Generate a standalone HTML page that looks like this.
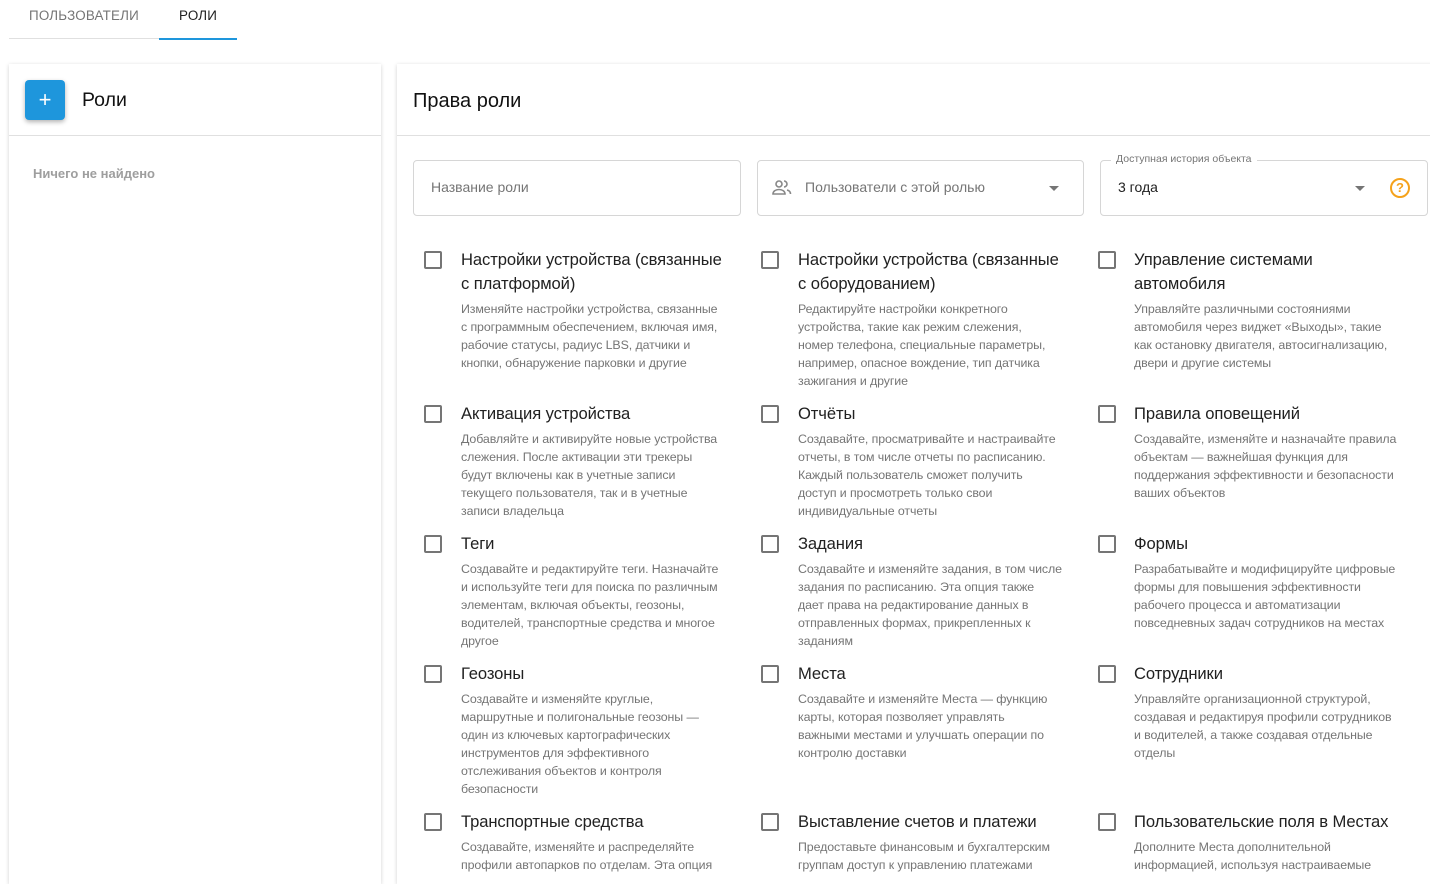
<!DOCTYPE html>
<html><head><meta charset="utf-8"><style>
*{box-sizing:border-box;margin:0;padding:0}
body{width:1430px;height:867px;overflow:hidden;background:#fff;font-family:"Liberation Sans",Arial,sans-serif;position:relative;color:#212121}
.tab{position:absolute;top:8px;font-size:13.4px;color:#757575;letter-spacing:.2px}
.card{position:absolute;background:#fff;box-shadow:0 1px 4px rgba(0,0,0,.18)}
.abs{position:absolute}
.cb{position:absolute;width:18px;height:18px;border:2px solid #757575;border-radius:2px}
.t{position:absolute;font-size:16.6px;line-height:24px;color:#212121;white-space:nowrap;letter-spacing:-.1px;margin-top:1px}
.d{position:absolute;font-size:12.4px;line-height:18px;color:#757575;white-space:nowrap;letter-spacing:-.1px;margin-top:1px}
.field{position:absolute;top:160px;height:56px;border:1px solid #d6d6d6;border-radius:4px;background:#fff}
.arrow{position:absolute;width:0;height:0;border-left:5px solid transparent;border-right:5px solid transparent;border-top:5px solid #757575}
</style></head><body>
<div class="tab" style="left:29px">ПОЛЬЗОВАТЕЛИ</div>
<div class="tab" style="left:179px;color:#212121">РОЛИ</div>
<div class="abs" style="left:9px;top:38px;width:228px;height:1px;background:#e0e0e0"></div>
<div class="abs" style="left:159px;top:38px;width:78px;height:2px;background:#1e96dc"></div>

<div class="card" style="left:9px;top:64px;width:372px;height:820px">
  <div class="abs" style="left:16px;top:16px;width:40px;height:40px;background:#1e96dc;border-radius:4px;box-shadow:0 2px 5px rgba(0,0,0,.3);color:#fff;font-size:22px;line-height:40px;text-align:center">+</div>
  <div class="abs" style="left:73px;top:25px;font-size:19.5px;color:#111">Роли</div>
  <div class="abs" style="left:0;top:71px;width:372px;height:1px;background:#e0e0e0"></div>
  <div class="abs" style="left:24px;top:102px;font-size:13px;color:#9e9e9e;font-weight:bold">Ничего не найдено</div>
</div>

<div class="card" style="left:397px;top:64px;width:1050px;height:820px"></div>
<div class="abs" style="left:413px;top:90px;font-size:20px;color:#111">Права роли</div>
<div class="abs" style="left:397px;top:135px;width:1033px;height:1px;background:#e0e0e0"></div>

<div class="field" style="left:413px;width:328px"><div class="abs" style="left:17px;top:18px;font-size:14px;color:#757575">Название роли</div></div>
<div class="field" style="left:757px;width:327px">
  <svg class="abs" style="left:14px;top:18px" width="20" height="18" viewBox="0 0 20 18" fill="none" stroke="#888" stroke-width="1.6"><circle cx="7" cy="5" r="3"/><path d="M1 15c0-3 3-4.5 6-4.5s6 1.5 6 4.5z"/><path d="M12 2a3 3 0 0 1 0 6M15 11c2 .5 3.5 1.8 3.5 4"/></svg>
  <div class="abs" style="left:47px;top:18px;font-size:14px;color:#757575">Пользователи с этой ролью</div>
  <div class="arrow" style="left:291px;top:25px"></div>
</div>
<div class="field" style="left:1100px;width:328px">
  <div class="abs" style="left:10px;top:-8px;background:#fff;padding:0 5px;font-size:10.5px;color:#757575">Доступная история объекта</div>
  <div class="abs" style="left:17px;top:18px;font-size:14px;color:#212121">3 года</div>
  <div class="arrow" style="left:254px;top:25px"></div>
  <div class="abs" style="left:289px;top:17px;width:20px;height:20px;border:2px solid #f5a21b;border-radius:50%;color:#f5a21b;font-size:13px;font-weight:bold;line-height:16px;text-align:center">?</div>
</div>

<!-- row 1 -->
<div class="cb" style="left:424px;top:251px"></div>
<div class="t" style="left:461px;top:247px">Настройки устройства (связанные<br>с платформой)</div>
<div class="d" style="left:461px;top:299px">Изменяйте настройки устройства, связанные<br>с программным обеспечением, включая имя,<br>рабочие статусы, радиус LBS, датчики и<br>кнопки, обнаружение парковки и другие</div>
<div class="cb" style="left:761px;top:251px"></div>
<div class="t" style="left:798px;top:247px">Настройки устройства (связанные<br>с оборудованием)</div>
<div class="d" style="left:798px;top:299px">Редактируйте настройки конкретного<br>устройства, такие как режим слежения,<br>номер телефона, специальные параметры,<br>например, опасное вождение, тип датчика<br>зажигания и другие</div>
<div class="cb" style="left:1098px;top:251px"></div>
<div class="t" style="left:1134px;top:247px">Управление системами<br>автомобиля</div>
<div class="d" style="left:1134px;top:299px">Управляйте различными состояниями<br>автомобиля через виджет «Выходы», такие<br>как остановку двигателя, автосигнализацию,<br>двери и другие системы</div>

<!-- row 2 -->
<div class="cb" style="left:424px;top:405px"></div>
<div class="t" style="left:461px;top:401px">Активация устройства</div>
<div class="d" style="left:461px;top:429px">Добавляйте и активируйте новые устройства<br>слежения. После активации эти трекеры<br>будут включены как в учетные записи<br>текущего пользователя, так и в учетные<br>записи владельца</div>
<div class="cb" style="left:761px;top:405px"></div>
<div class="t" style="left:798px;top:401px">Отчёты</div>
<div class="d" style="left:798px;top:429px">Создавайте, просматривайте и настраивайте<br>отчеты, в том числе отчеты по расписанию.<br>Каждый пользователь сможет получить<br>доступ и просмотреть только свои<br>индивидуальные отчеты</div>
<div class="cb" style="left:1098px;top:405px"></div>
<div class="t" style="left:1134px;top:401px">Правила оповещений</div>
<div class="d" style="left:1134px;top:429px">Создавайте, изменяйте и назначайте правила<br>объектам — важнейшая функция для<br>поддержания эффективности и безопасности<br>ваших объектов</div>

<!-- row 3 -->
<div class="cb" style="left:424px;top:535px"></div>
<div class="t" style="left:461px;top:531px">Теги</div>
<div class="d" style="left:461px;top:559px">Создавайте и редактируйте теги. Назначайте<br>и используйте теги для поиска по различным<br>элементам, включая объекты, геозоны,<br>водителей, транспортные средства и многое<br>другое</div>
<div class="cb" style="left:761px;top:535px"></div>
<div class="t" style="left:798px;top:531px">Задания</div>
<div class="d" style="left:798px;top:559px">Создавайте и изменяйте задания, в том числе<br>задания по расписанию. Эта опция также<br>дает права на редактирование данных в<br>отправленных формах, прикрепленных к<br>заданиям</div>
<div class="cb" style="left:1098px;top:535px"></div>
<div class="t" style="left:1134px;top:531px">Формы</div>
<div class="d" style="left:1134px;top:559px">Разрабатывайте и модифицируйте цифровые<br>формы для повышения эффективности<br>рабочего процесса и автоматизации<br>повседневных задач сотрудников на местах</div>

<!-- row 4 -->
<div class="cb" style="left:424px;top:665px"></div>
<div class="t" style="left:461px;top:661px">Геозоны</div>
<div class="d" style="left:461px;top:689px">Создавайте и изменяйте круглые,<br>маршрутные и полигональные геозоны —<br>один из ключевых картографических<br>инструментов для эффективного<br>отслеживания объектов и контроля<br>безопасности</div>
<div class="cb" style="left:761px;top:665px"></div>
<div class="t" style="left:798px;top:661px">Места</div>
<div class="d" style="left:798px;top:689px">Создавайте и изменяйте Места — функцию<br>карты, которая позволяет управлять<br>важными местами и улучшать операции по<br>контролю доставки</div>
<div class="cb" style="left:1098px;top:665px"></div>
<div class="t" style="left:1134px;top:661px">Сотрудники</div>
<div class="d" style="left:1134px;top:689px">Управляйте организационной структурой,<br>создавая и редактируя профили сотрудников<br>и водителей, а также создавая отдельные<br>отделы</div>

<!-- row 5 -->
<div class="cb" style="left:424px;top:813px"></div>
<div class="t" style="left:461px;top:809px">Транспортные средства</div>
<div class="d" style="left:461px;top:837px">Создавайте, изменяйте и распределяйте<br>профили автопарков по отделам. Эта опция</div>
<div class="cb" style="left:761px;top:813px"></div>
<div class="t" style="left:798px;top:809px">Выставление счетов и платежи</div>
<div class="d" style="left:798px;top:837px">Предоставьте финансовым и бухгалтерским<br>группам доступ к управлению платежами</div>
<div class="cb" style="left:1098px;top:813px"></div>
<div class="t" style="left:1134px;top:809px">Пользовательские поля в Местах</div>
<div class="d" style="left:1134px;top:837px">Дополните Места дополнительной<br>информацией, используя настраиваемые</div>
</body></html>
